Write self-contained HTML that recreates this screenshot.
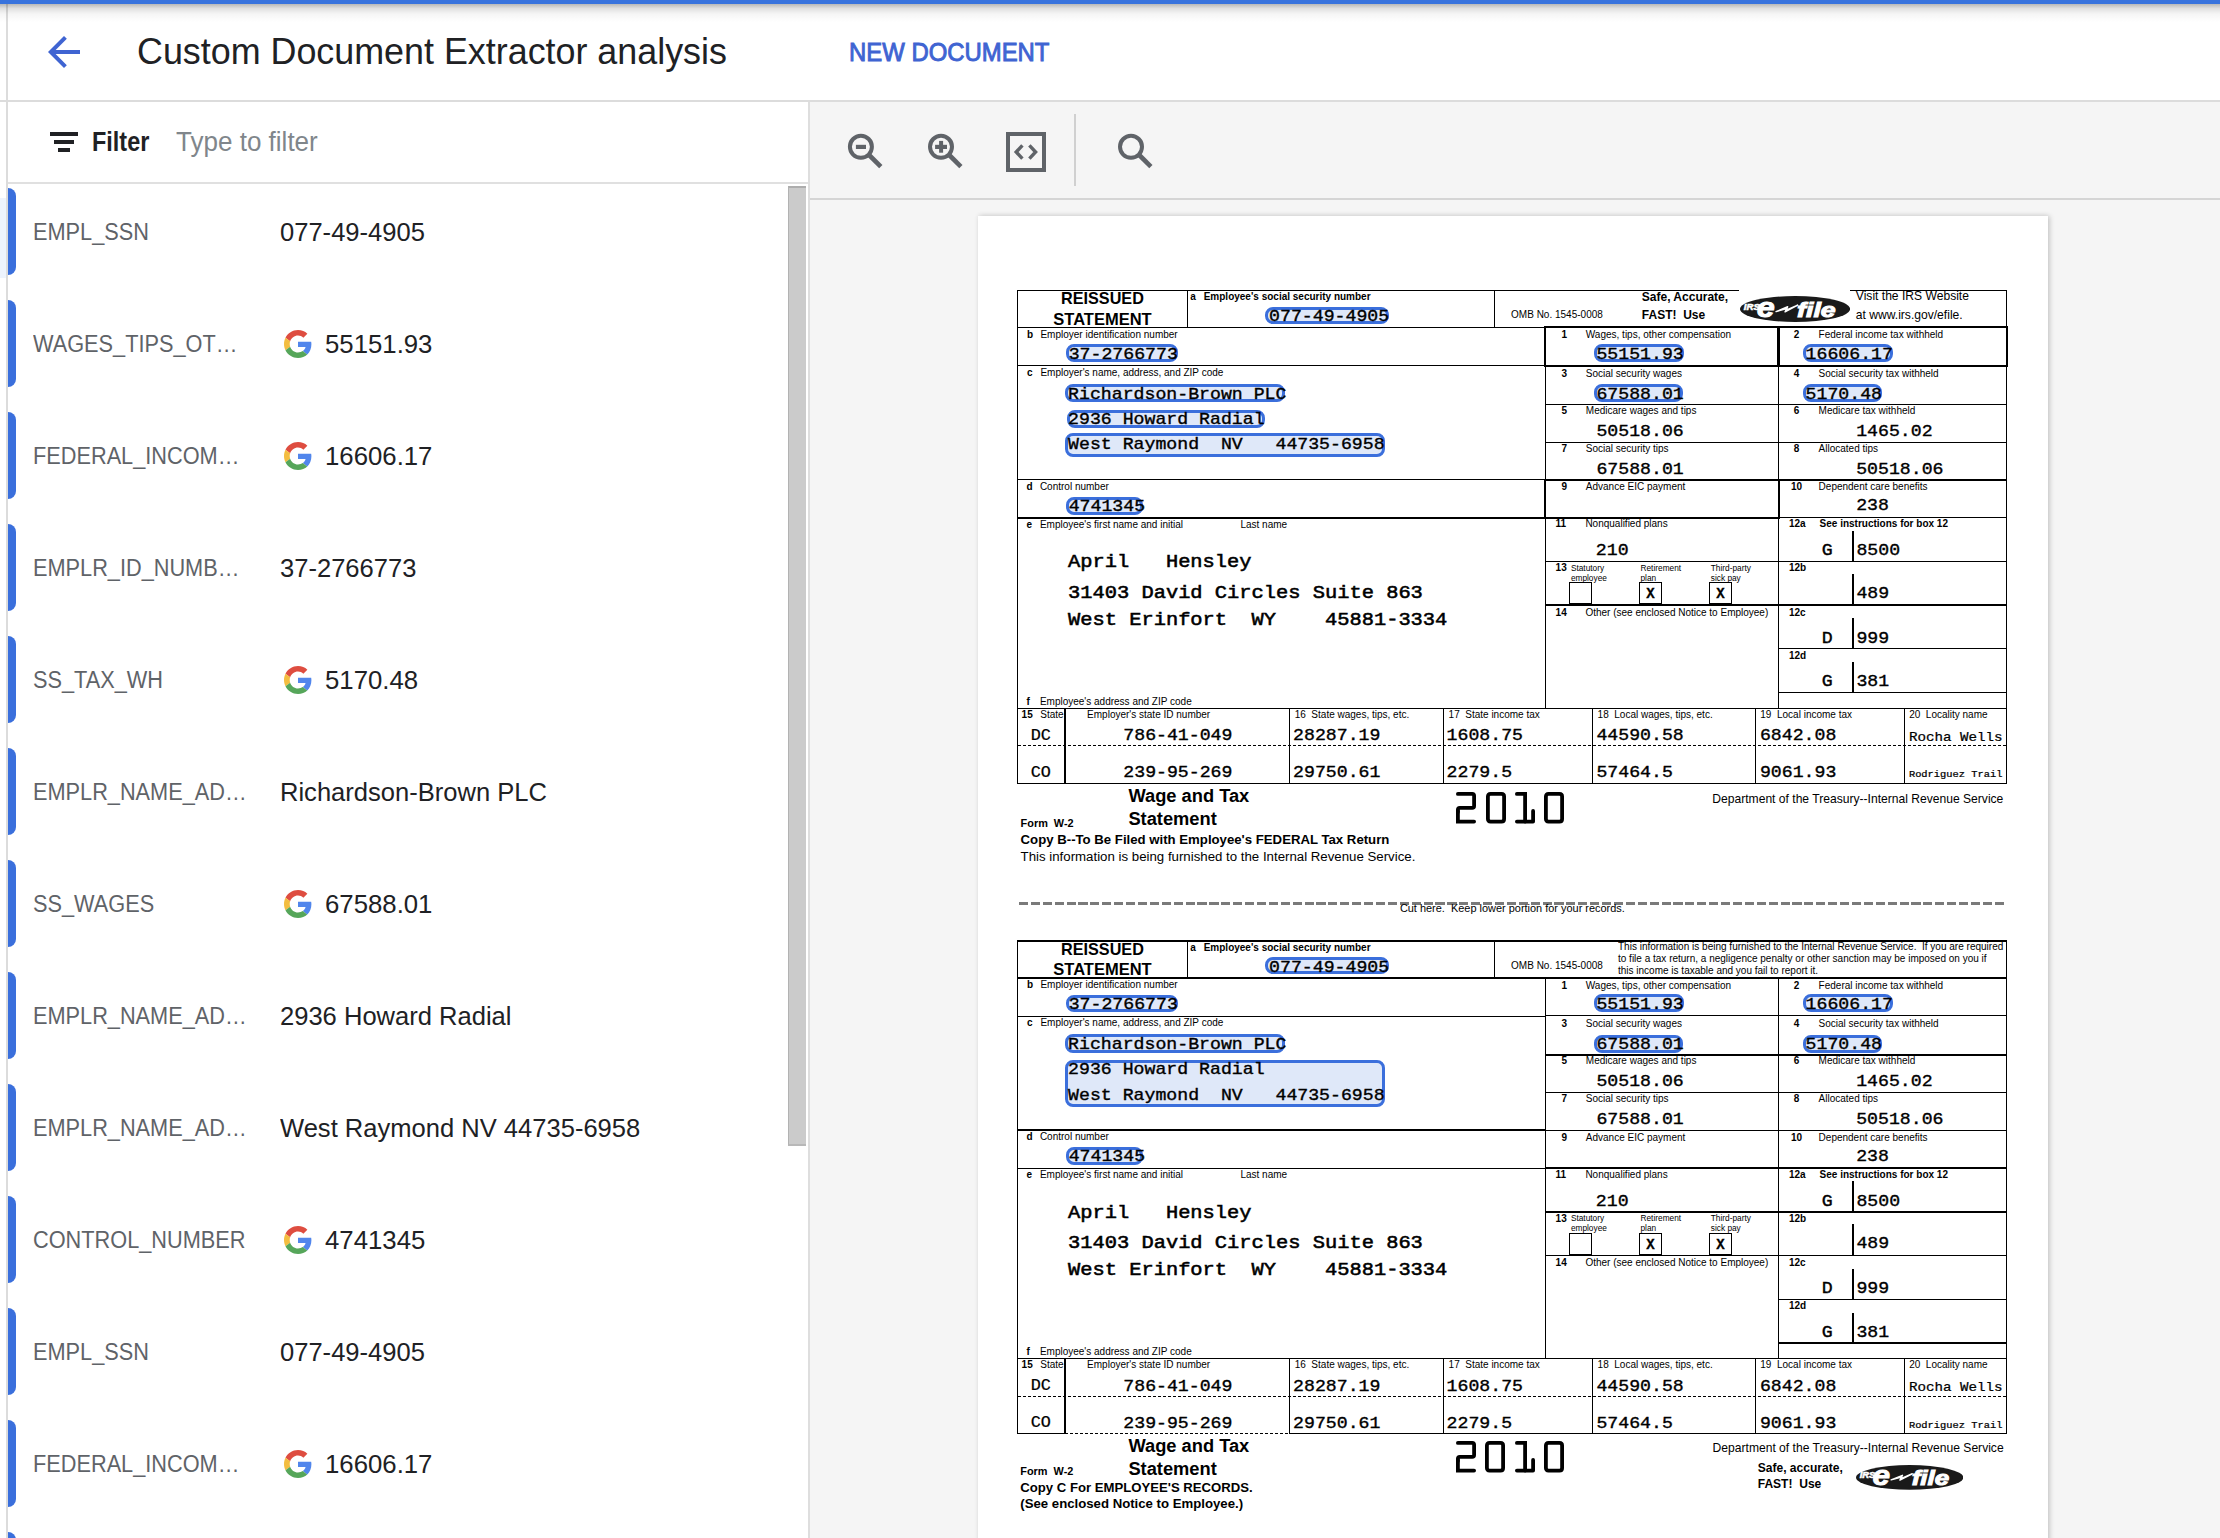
<!DOCTYPE html><html><head><meta charset="utf-8"><style>
html,body{margin:0;padding:0;width:2220px;height:1538px;overflow:hidden;background:#fff;}
.t{position:absolute;white-space:pre;}
.r{position:absolute;}
svg{position:absolute;}
</style></head><body>
<div class="r" style="left:0.00px;top:198.00px;width:6.20px;height:80.00px;background:#eef4fd"></div>
<div class="r" style="left:6.20px;top:4.00px;width:1.80px;height:1534.00px;background:#dcdcdc"></div>
<div class="r" style="left:0.00px;top:0.00px;width:2220.00px;height:4.00px;background:#3873dd"></div>
<div class="r" style="left:0.00px;top:4.00px;width:2220.00px;height:18.00px;background:linear-gradient(to bottom, rgba(0,0,0,0.28), rgba(0,0,0,0.12) 25%, rgba(0,0,0,0.04) 55%, rgba(0,0,0,0))"></div>
<div class="r" style="left:0.00px;top:100.00px;width:2220.00px;height:1.50px;background:#dcdcdc"></div>
<svg style="left:40px;top:28px" width="48" height="48" viewBox="0 0 24 24"><path fill="#3f64d2" d="M20 11H7.83l5.59-5.59L12 4l-8 8 8 8 1.41-1.41L7.83 13H20v-2z"/></svg>
<div class="t" style="left:137.00px;top:32.69px;font:normal 37.80px/37.80px 'Liberation Sans',sans-serif;color:#202124;transform:scale(0.9488,1.0000);transform-origin:0 32.01px;">Custom Document Extractor analysis</div>
<div class="t" style="left:849.00px;top:39.25px;font:normal 26.40px/26.40px 'Liberation Sans',sans-serif;color:#3f64d2;transform:scale(0.9054,1.0000);transform-origin:0 22.35px;-webkit-text-stroke:0.95px #3f64d2;">NEW DOCUMENT</div>
<div class="r" style="left:7.50px;top:182.00px;width:801.50px;height:1.50px;background:#e0e0e0"></div>
<div class="r" style="left:50.00px;top:132.00px;width:28.00px;height:4.30px;background:#202124"></div>
<div class="r" style="left:54.00px;top:140.00px;width:20.00px;height:4.30px;background:#202124"></div>
<div class="r" style="left:58.30px;top:147.70px;width:11.70px;height:4.30px;background:#202124"></div>
<div class="t" style="left:91.70px;top:129.22px;font:bold 26.90px/26.90px 'Liberation Sans',sans-serif;color:#202124;transform:scale(0.8713,1.0000);transform-origin:0 22.78px;">Filter</div>
<div class="t" style="left:176.00px;top:129.22px;font:normal 26.90px/26.90px 'Liberation Sans',sans-serif;color:#80868b;transform:scale(0.9678,1.0000);transform-origin:0 22.78px;">Type to filter</div>
<div class="r" style="left:808.20px;top:101.50px;width:1.80px;height:1436.50px;background:#dedede"></div>
<div class="r" style="left:788.10px;top:186.00px;width:17.80px;height:960.00px;background:#cbcbcb;border-left:1.8px solid #b2b2b2;border-top:2px solid #adadad;border-bottom:2px solid #b8b8b8;box-sizing:border-box"></div>
<div class="r" style="left:8.00px;top:188.00px;width:8.00px;height:87.00px;background:#3a6fdc;border-radius:0 8px 8px 0"></div>
<div class="t" style="left:32.50px;top:220.29px;font:normal 24.70px/24.70px 'Liberation Sans',sans-serif;color:#5f6368;transform:scale(0.8800,1.0000);transform-origin:0 20.91px;">EMPL_SSN</div>
<div class="t" style="left:280.20px;top:218.76px;font:normal 26.50px/26.50px 'Liberation Sans',sans-serif;color:#202124;transform:scale(0.9640,1.0000);transform-origin:0 22.44px;">077-49-4905</div>
<div class="r" style="left:8.00px;top:300.00px;width:8.00px;height:87.00px;background:#3a6fdc;border-radius:0 8px 8px 0"></div>
<div class="t" style="left:32.50px;top:332.29px;font:normal 24.70px/24.70px 'Liberation Sans',sans-serif;color:#5f6368;transform:scale(0.8800,1.0000);transform-origin:0 20.91px;">WAGES_TIPS_OT…</div>
<svg style="left:283.9px;top:329.8px" width="28" height="28" viewBox="0 0 48 48"><path fill="#de4d40" d="M24 9.5c3.54 0 6.71 1.22 9.21 3.6l6.85-6.85C35.9 2.38 30.47 0 24 0 14.62 0 6.51 5.38 2.56 13.22l7.98 6.19C12.43 13.72 17.74 9.5 24 9.5z"/><path fill="#5186ec" d="M46.98 24.55c0-1.57-.15-3.09-.38-4.55H24v9.02h12.94c-.58 2.96-2.26 5.480-4.78 7.18l7.73 6c4.51-4.18 7.09-10.36 7.09-17.65z"/><path fill="#f3bd40" d="M10.53 28.59c-.48-1.45-.76-2.99-.76-4.59s.27-3.14.76-4.59l-7.98-6.19C.92 16.46 0 20.12 0 24c0 3.880.92 7.54 2.56 10.78l7.97-6.19z"/><path fill="#56a65a" d="M24 48c6.48 0 11.930-2.13 15.89-5.81l-7.73-6c-2.15 1.45-4.92 2.3-8.16 2.3-6.26 0-11.57-4.22-13.47-9.91l-7.98 6.19C6.51 42.62 14.62 48 24 48z"/></svg>
<div class="t" style="left:325.00px;top:330.76px;font:normal 26.50px/26.50px 'Liberation Sans',sans-serif;color:#202124;transform:scale(0.9720,1.0000);transform-origin:0 22.44px;">55151.93</div>
<div class="r" style="left:8.00px;top:412.00px;width:8.00px;height:87.00px;background:#3a6fdc;border-radius:0 8px 8px 0"></div>
<div class="t" style="left:32.50px;top:444.29px;font:normal 24.70px/24.70px 'Liberation Sans',sans-serif;color:#5f6368;transform:scale(0.8800,1.0000);transform-origin:0 20.91px;">FEDERAL_INCOM…</div>
<svg style="left:283.9px;top:441.8px" width="28" height="28" viewBox="0 0 48 48"><path fill="#de4d40" d="M24 9.5c3.54 0 6.71 1.22 9.21 3.6l6.85-6.85C35.9 2.38 30.47 0 24 0 14.62 0 6.51 5.38 2.56 13.22l7.98 6.19C12.43 13.72 17.74 9.5 24 9.5z"/><path fill="#5186ec" d="M46.98 24.55c0-1.57-.15-3.09-.38-4.55H24v9.02h12.94c-.58 2.96-2.26 5.480-4.78 7.18l7.73 6c4.51-4.18 7.09-10.36 7.09-17.65z"/><path fill="#f3bd40" d="M10.53 28.59c-.48-1.45-.76-2.99-.76-4.59s.27-3.14.76-4.59l-7.98-6.19C.92 16.46 0 20.12 0 24c0 3.880.92 7.54 2.56 10.78l7.97-6.19z"/><path fill="#56a65a" d="M24 48c6.48 0 11.930-2.13 15.89-5.81l-7.73-6c-2.15 1.45-4.92 2.3-8.16 2.3-6.26 0-11.57-4.22-13.47-9.91l-7.98 6.19C6.51 42.62 14.62 48 24 48z"/></svg>
<div class="t" style="left:325.00px;top:442.76px;font:normal 26.50px/26.50px 'Liberation Sans',sans-serif;color:#202124;transform:scale(0.9720,1.0000);transform-origin:0 22.44px;">16606.17</div>
<div class="r" style="left:8.00px;top:524.00px;width:8.00px;height:87.00px;background:#3a6fdc;border-radius:0 8px 8px 0"></div>
<div class="t" style="left:32.50px;top:556.29px;font:normal 24.70px/24.70px 'Liberation Sans',sans-serif;color:#5f6368;transform:scale(0.8800,1.0000);transform-origin:0 20.91px;">EMPLR_ID_NUMB…</div>
<div class="t" style="left:280.20px;top:554.76px;font:normal 26.50px/26.50px 'Liberation Sans',sans-serif;color:#202124;transform:scale(0.9640,1.0000);transform-origin:0 22.44px;">37-2766773</div>
<div class="r" style="left:8.00px;top:636.00px;width:8.00px;height:87.00px;background:#3a6fdc;border-radius:0 8px 8px 0"></div>
<div class="t" style="left:32.50px;top:668.29px;font:normal 24.70px/24.70px 'Liberation Sans',sans-serif;color:#5f6368;transform:scale(0.8800,1.0000);transform-origin:0 20.91px;">SS_TAX_WH</div>
<svg style="left:283.9px;top:665.8px" width="28" height="28" viewBox="0 0 48 48"><path fill="#de4d40" d="M24 9.5c3.54 0 6.71 1.22 9.21 3.6l6.85-6.85C35.9 2.38 30.47 0 24 0 14.62 0 6.51 5.38 2.56 13.22l7.98 6.19C12.43 13.72 17.74 9.5 24 9.5z"/><path fill="#5186ec" d="M46.98 24.55c0-1.57-.15-3.09-.38-4.55H24v9.02h12.94c-.58 2.96-2.26 5.480-4.78 7.18l7.73 6c4.51-4.18 7.09-10.36 7.09-17.65z"/><path fill="#f3bd40" d="M10.53 28.59c-.48-1.45-.76-2.99-.76-4.59s.27-3.14.76-4.59l-7.98-6.19C.92 16.46 0 20.12 0 24c0 3.880.92 7.54 2.56 10.78l7.97-6.19z"/><path fill="#56a65a" d="M24 48c6.48 0 11.930-2.13 15.89-5.81l-7.73-6c-2.15 1.45-4.92 2.3-8.16 2.3-6.26 0-11.57-4.22-13.47-9.91l-7.98 6.19C6.51 42.62 14.62 48 24 48z"/></svg>
<div class="t" style="left:325.00px;top:666.76px;font:normal 26.50px/26.50px 'Liberation Sans',sans-serif;color:#202124;transform:scale(0.9720,1.0000);transform-origin:0 22.44px;">5170.48</div>
<div class="r" style="left:8.00px;top:748.00px;width:8.00px;height:87.00px;background:#3a6fdc;border-radius:0 8px 8px 0"></div>
<div class="t" style="left:32.50px;top:780.29px;font:normal 24.70px/24.70px 'Liberation Sans',sans-serif;color:#5f6368;transform:scale(0.8800,1.0000);transform-origin:0 20.91px;">EMPLR_NAME_AD…</div>
<div class="t" style="left:280.20px;top:778.76px;font:normal 26.50px/26.50px 'Liberation Sans',sans-serif;color:#202124;transform:scale(0.9640,1.0000);transform-origin:0 22.44px;">Richardson-Brown PLC</div>
<div class="r" style="left:8.00px;top:860.00px;width:8.00px;height:87.00px;background:#3a6fdc;border-radius:0 8px 8px 0"></div>
<div class="t" style="left:32.50px;top:892.29px;font:normal 24.70px/24.70px 'Liberation Sans',sans-serif;color:#5f6368;transform:scale(0.8800,1.0000);transform-origin:0 20.91px;">SS_WAGES</div>
<svg style="left:283.9px;top:889.8px" width="28" height="28" viewBox="0 0 48 48"><path fill="#de4d40" d="M24 9.5c3.54 0 6.71 1.22 9.21 3.6l6.85-6.85C35.9 2.38 30.47 0 24 0 14.62 0 6.51 5.38 2.56 13.22l7.98 6.19C12.43 13.72 17.74 9.5 24 9.5z"/><path fill="#5186ec" d="M46.98 24.55c0-1.57-.15-3.09-.38-4.55H24v9.02h12.94c-.58 2.96-2.26 5.480-4.78 7.18l7.73 6c4.51-4.18 7.09-10.36 7.09-17.65z"/><path fill="#f3bd40" d="M10.53 28.59c-.48-1.45-.76-2.99-.76-4.59s.27-3.14.76-4.59l-7.98-6.19C.92 16.46 0 20.12 0 24c0 3.880.92 7.54 2.56 10.78l7.97-6.19z"/><path fill="#56a65a" d="M24 48c6.48 0 11.930-2.13 15.89-5.81l-7.73-6c-2.15 1.45-4.92 2.3-8.16 2.3-6.26 0-11.57-4.22-13.47-9.91l-7.98 6.19C6.51 42.62 14.62 48 24 48z"/></svg>
<div class="t" style="left:325.00px;top:890.76px;font:normal 26.50px/26.50px 'Liberation Sans',sans-serif;color:#202124;transform:scale(0.9720,1.0000);transform-origin:0 22.44px;">67588.01</div>
<div class="r" style="left:8.00px;top:972.00px;width:8.00px;height:87.00px;background:#3a6fdc;border-radius:0 8px 8px 0"></div>
<div class="t" style="left:32.50px;top:1004.29px;font:normal 24.70px/24.70px 'Liberation Sans',sans-serif;color:#5f6368;transform:scale(0.8800,1.0000);transform-origin:0 20.91px;">EMPLR_NAME_AD…</div>
<div class="t" style="left:280.20px;top:1002.76px;font:normal 26.50px/26.50px 'Liberation Sans',sans-serif;color:#202124;transform:scale(0.9640,1.0000);transform-origin:0 22.44px;">2936 Howard Radial</div>
<div class="r" style="left:8.00px;top:1084.00px;width:8.00px;height:87.00px;background:#3a6fdc;border-radius:0 8px 8px 0"></div>
<div class="t" style="left:32.50px;top:1116.29px;font:normal 24.70px/24.70px 'Liberation Sans',sans-serif;color:#5f6368;transform:scale(0.8800,1.0000);transform-origin:0 20.91px;">EMPLR_NAME_AD…</div>
<div class="t" style="left:280.20px;top:1114.76px;font:normal 26.50px/26.50px 'Liberation Sans',sans-serif;color:#202124;transform:scale(0.9640,1.0000);transform-origin:0 22.44px;">West Raymond NV 44735-6958</div>
<div class="r" style="left:8.00px;top:1196.00px;width:8.00px;height:87.00px;background:#3a6fdc;border-radius:0 8px 8px 0"></div>
<div class="t" style="left:32.50px;top:1228.29px;font:normal 24.70px/24.70px 'Liberation Sans',sans-serif;color:#5f6368;transform:scale(0.8800,1.0000);transform-origin:0 20.91px;">CONTROL_NUMBER</div>
<svg style="left:283.9px;top:1225.8px" width="28" height="28" viewBox="0 0 48 48"><path fill="#de4d40" d="M24 9.5c3.54 0 6.71 1.22 9.21 3.6l6.85-6.85C35.9 2.38 30.47 0 24 0 14.62 0 6.51 5.38 2.56 13.22l7.98 6.19C12.43 13.72 17.74 9.5 24 9.5z"/><path fill="#5186ec" d="M46.98 24.55c0-1.57-.15-3.09-.38-4.55H24v9.02h12.94c-.58 2.96-2.26 5.480-4.78 7.18l7.73 6c4.51-4.18 7.09-10.36 7.09-17.65z"/><path fill="#f3bd40" d="M10.53 28.59c-.48-1.45-.76-2.99-.76-4.59s.27-3.14.76-4.59l-7.98-6.19C.92 16.46 0 20.12 0 24c0 3.880.92 7.54 2.56 10.78l7.97-6.19z"/><path fill="#56a65a" d="M24 48c6.48 0 11.930-2.13 15.89-5.81l-7.73-6c-2.15 1.45-4.92 2.3-8.16 2.3-6.26 0-11.57-4.22-13.47-9.91l-7.98 6.19C6.51 42.62 14.62 48 24 48z"/></svg>
<div class="t" style="left:325.00px;top:1226.76px;font:normal 26.50px/26.50px 'Liberation Sans',sans-serif;color:#202124;transform:scale(0.9720,1.0000);transform-origin:0 22.44px;">4741345</div>
<div class="r" style="left:8.00px;top:1308.00px;width:8.00px;height:87.00px;background:#3a6fdc;border-radius:0 8px 8px 0"></div>
<div class="t" style="left:32.50px;top:1340.29px;font:normal 24.70px/24.70px 'Liberation Sans',sans-serif;color:#5f6368;transform:scale(0.8800,1.0000);transform-origin:0 20.91px;">EMPL_SSN</div>
<div class="t" style="left:280.20px;top:1338.76px;font:normal 26.50px/26.50px 'Liberation Sans',sans-serif;color:#202124;transform:scale(0.9640,1.0000);transform-origin:0 22.44px;">077-49-4905</div>
<div class="r" style="left:8.00px;top:1420.00px;width:8.00px;height:87.00px;background:#3a6fdc;border-radius:0 8px 8px 0"></div>
<div class="t" style="left:32.50px;top:1452.29px;font:normal 24.70px/24.70px 'Liberation Sans',sans-serif;color:#5f6368;transform:scale(0.8800,1.0000);transform-origin:0 20.91px;">FEDERAL_INCOM…</div>
<svg style="left:283.9px;top:1449.8px" width="28" height="28" viewBox="0 0 48 48"><path fill="#de4d40" d="M24 9.5c3.54 0 6.71 1.22 9.21 3.6l6.85-6.85C35.9 2.38 30.47 0 24 0 14.62 0 6.51 5.38 2.56 13.22l7.98 6.19C12.43 13.72 17.74 9.5 24 9.5z"/><path fill="#5186ec" d="M46.98 24.55c0-1.57-.15-3.09-.38-4.55H24v9.02h12.94c-.58 2.96-2.26 5.480-4.78 7.18l7.73 6c4.51-4.18 7.09-10.36 7.09-17.65z"/><path fill="#f3bd40" d="M10.53 28.59c-.48-1.45-.76-2.99-.76-4.59s.27-3.14.76-4.59l-7.98-6.19C.92 16.46 0 20.12 0 24c0 3.880.92 7.54 2.56 10.78l7.97-6.19z"/><path fill="#56a65a" d="M24 48c6.48 0 11.930-2.13 15.89-5.81l-7.73-6c-2.15 1.45-4.92 2.3-8.16 2.3-6.26 0-11.57-4.22-13.47-9.91l-7.98 6.19C6.51 42.62 14.62 48 24 48z"/></svg>
<div class="t" style="left:325.00px;top:1450.76px;font:normal 26.50px/26.50px 'Liberation Sans',sans-serif;color:#202124;transform:scale(0.9720,1.0000);transform-origin:0 22.44px;">16606.17</div>
<div class="r" style="left:8.00px;top:1532.00px;width:8.00px;height:87.00px;background:#3a6fdc;border-radius:0 8px 8px 0"></div>
<div class="r" style="left:810.00px;top:101.50px;width:1410.00px;height:96.50px;background:#f5f5f5"></div>
<div class="r" style="left:810.00px;top:197.60px;width:1410.00px;height:2.20px;background:#d5d5d5"></div>
<svg style="left:0;top:0;overflow:visible" width="1" height="1"><g transform="translate(0.00 0)" fill="none" stroke="#5f6368"><circle cx="860.9" cy="146.8" r="11" stroke-width="4"/><path d="M868.6 154.5 L880.8 166.7" stroke-width="4.6"/></g><rect x="855.9" y="144.8" width="10.1" height="4.2" fill="#5f6368"/></svg>
<svg style="left:0;top:0;overflow:visible" width="1" height="1"><g transform="translate(80.10 0)" fill="none" stroke="#5f6368"><circle cx="860.9" cy="146.8" r="11" stroke-width="4"/><path d="M868.6 154.5 L880.8 166.7" stroke-width="4.6"/></g><rect x="935.1" y="144.8" width="11.9" height="4.2" fill="#5f6368"/><rect x="939.1" y="140.9" width="4" height="11.8" fill="#5f6368"/></svg>
<svg style="left:0;top:0;overflow:visible" width="1" height="1"><g transform="translate(270.10 0)" fill="none" stroke="#5f6368"><circle cx="860.9" cy="146.8" r="11" stroke-width="4"/><path d="M868.6 154.5 L880.8 166.7" stroke-width="4.6"/></g></svg>
<div class="r" style="left:1006.00px;top:131.90px;width:40.10px;height:39.90px;border:4px solid #5f6368;box-sizing:border-box"></div>
<svg style="left:0;top:0;overflow:visible" width="1" height="1"><path fill="none" stroke="#5f6368" stroke-width="3.4" d="M1022.4 145.4 L1016.2 152 L1022.4 158.6 M1029.4 145.4 L1035.6 152 L1029.4 158.6"/></svg>
<div class="r" style="left:1074.20px;top:114.00px;width:1.40px;height:72.00px;background:#d0d0d0"></div>
<div class="r" style="left:810.00px;top:199.80px;width:1410.00px;height:1338.20px;background:#f5f5f5"></div>
<div class="r" style="left:978.00px;top:216.00px;width:1070.00px;height:1344.00px;background:#fff;box-shadow:2px 0 5px rgba(0,0,0,0.16), 0 -1px 5px rgba(0,0,0,0.06)"></div>
<div class="r" style="left:1016.85px;top:289.85px;width:722.15px;height:1.30px;background:#000"></div>
<div class="r" style="left:1850.00px;top:289.85px;width:157.15px;height:1.30px;background:#000"></div>
<div class="r" style="left:1016.85px;top:290.50px;width:1.30px;height:493.45px;background:#000"></div>
<div class="r" style="left:2005.85px;top:290.50px;width:1.30px;height:493.45px;background:#000"></div>
<div class="r" style="left:1186.65px;top:290.50px;width:1.30px;height:37.00px;background:#000"></div>
<div class="r" style="left:1493.95px;top:290.50px;width:1.30px;height:37.00px;background:#000"></div>
<div class="r" style="left:1017.50px;top:326.85px;width:989.00px;height:1.30px;background:#000"></div>
<div class="r" style="left:1017.50px;top:365.15px;width:528.10px;height:1.30px;background:#000"></div>
<div class="r" style="left:1017.50px;top:478.85px;width:528.10px;height:1.30px;background:#000"></div>
<div class="r" style="left:1017.50px;top:517.35px;width:528.10px;height:1.30px;background:#000"></div>
<div class="r" style="left:1017.50px;top:707.65px;width:989.00px;height:1.30px;background:#000"></div>
<div class="r" style="left:1544.95px;top:327.50px;width:1.30px;height:380.80px;background:#000"></div>
<div class="r" style="left:1778.05px;top:327.50px;width:1.30px;height:380.80px;background:#000"></div>
<div class="r" style="left:1545.60px;top:364.55px;width:460.90px;height:1.30px;background:#000"></div>
<div class="r" style="left:1545.60px;top:403.85px;width:460.90px;height:1.30px;background:#000"></div>
<div class="r" style="left:1545.60px;top:441.55px;width:460.90px;height:1.30px;background:#000"></div>
<div class="r" style="left:1545.60px;top:479.35px;width:460.90px;height:1.30px;background:#000"></div>
<div class="r" style="left:1545.60px;top:516.95px;width:460.90px;height:1.30px;background:#000"></div>
<div class="r" style="left:1545.60px;top:560.85px;width:460.90px;height:1.30px;background:#000"></div>
<div class="r" style="left:1545.60px;top:604.35px;width:460.90px;height:1.30px;background:#000"></div>
<div class="r" style="left:1778.70px;top:648.15px;width:227.80px;height:1.30px;background:#000"></div>
<div class="r" style="left:1778.70px;top:692.05px;width:227.80px;height:1.30px;background:#000"></div>
<div class="r" style="left:1852.45px;top:530.50px;width:1.30px;height:31.00px;background:#000"></div>
<div class="r" style="left:1852.45px;top:573.80px;width:1.30px;height:31.20px;background:#000"></div>
<div class="r" style="left:1852.45px;top:618.10px;width:1.30px;height:30.70px;background:#000"></div>
<div class="r" style="left:1852.45px;top:662.40px;width:1.30px;height:30.30px;background:#000"></div>
<div class="r" style="left:1544.20px;top:326.10px;width:463.70px;height:40.50px;border:2.80px solid #000;box-sizing:border-box"></div>
<div class="r" style="left:1544.20px;top:478.60px;width:235.90px;height:40.40px;border:2.80px solid #000;box-sizing:border-box"></div>
<div class="r" style="left:1777.30px;top:327.50px;width:2.80px;height:37.70px;background:#000"></div>
<div class="r" style="left:1017.50px;top:745.40px;width:989.00px;height:1.00px;background:repeating-linear-gradient(to right, #000 0, #000 3.20px, transparent 3.20px, transparent 5.00px)"></div>
<div class="r" style="left:1016.85px;top:782.65px;width:990.30px;height:1.30px;background:#000"></div>
<div class="r" style="left:1064.25px;top:708.30px;width:1.30px;height:75.00px;background:#000"></div>
<div class="r" style="left:1288.85px;top:708.30px;width:1.30px;height:75.00px;background:#000"></div>
<div class="r" style="left:1442.75px;top:708.30px;width:1.30px;height:75.00px;background:#000"></div>
<div class="r" style="left:1591.55px;top:708.30px;width:1.30px;height:75.00px;background:#000"></div>
<div class="r" style="left:1755.05px;top:708.30px;width:1.30px;height:75.00px;background:#000"></div>
<div class="r" style="left:1903.65px;top:708.30px;width:1.30px;height:75.00px;background:#000"></div>
<div class="t" style="left:1061.09px;top:290.28px;font:bold 16.20px/16.20px 'Liberation Sans',sans-serif;color:#000;">REISSUED</div>
<div class="t" style="left:1053.31px;top:310.83px;font:bold 16.50px/16.50px 'Liberation Sans',sans-serif;color:#000;">STATEMENT</div>
<div class="t" style="left:1190.20px;top:292.23px;font:bold 10.00px/10.00px 'Liberation Sans',sans-serif;color:#000;">a</div>
<div class="t" style="left:1203.70px;top:292.23px;font:bold 10.00px/10.00px 'Liberation Sans',sans-serif;color:#000;">Employee's social security number</div>
<div class="r" style="left:1265.20px;top:306.50px;width:123.70px;height:17.40px;border:3.8px solid #3b6fdc;border-radius:8px;box-sizing:border-box;background:rgba(59,111,220,0.16)"></div>
<div class="t" style="left:1269.10px;top:307.16px;font:normal 18.20px/18.20px 'Liberation Mono',monospace;color:#000;transform:scale(1.0000,0.9350);transform-origin:0 13.94px;-webkit-text-stroke:0.4px #000;">077-49-4905</div>
<div class="t" style="left:1511.10px;top:310.43px;font:normal 10.00px/10.00px 'Liberation Sans',sans-serif;color:#000;">OMB No. 1545-0008</div>
<div class="t" style="left:1641.80px;top:290.54px;font:bold 12.00px/12.00px 'Liberation Sans',sans-serif;color:#000;">Safe, Accurate,</div>
<div class="t" style="left:1641.80px;top:308.74px;font:bold 12.00px/12.00px 'Liberation Sans',sans-serif;color:#000;">FAST!  Use</div>
<svg style="left:1739.50px;top:296.20px" width="110.20" height="26.00" viewBox="0 0 110 26" preserveAspectRatio="none"><ellipse cx="55" cy="13" rx="55" ry="13" fill="#1a1a1a"/><g fill="#fff" stroke="#fff" font-family="Liberation Sans" font-weight="bold" font-style="italic"><text x="3.8" y="13.6" font-size="9.6" textLength="16" lengthAdjust="spacingAndGlyphs" stroke-width="0.6">IRS</text><text x="16.8" y="21.3" font-size="28" textLength="18" lengthAdjust="spacingAndGlyphs" stroke-width="0.9">e</text><path d="M36 15.6 L47.6 10.8 L46 14.2 L57.6 9.2 L45 15.8 L46.6 12.6 Z" stroke-width="1.5" stroke-linejoin="round"/><text x="57" y="20.6" font-size="20.5" textLength="38.5" lengthAdjust="spacingAndGlyphs" stroke-width="1.0">file</text></g></svg>
<div class="t" style="left:1855.80px;top:290.45px;font:normal 12.10px/12.10px 'Liberation Sans',sans-serif;color:#000;">Visit the IRS Website</div>
<div class="t" style="left:1855.80px;top:308.65px;font:normal 12.10px/12.10px 'Liberation Sans',sans-serif;color:#000;">at www.irs.gov/efile.</div>
<div class="t" style="left:1026.90px;top:329.53px;font:bold 10.00px/10.00px 'Liberation Sans',sans-serif;color:#000;">b</div>
<div class="t" style="left:1040.40px;top:329.53px;font:normal 10.00px/10.00px 'Liberation Sans',sans-serif;color:#000;">Employer identification number</div>
<div class="r" style="left:1065.50px;top:344.20px;width:112.30px;height:17.80px;border:3.8px solid #3b6fdc;border-radius:8px;box-sizing:border-box;background:rgba(59,111,220,0.16)"></div>
<div class="t" style="left:1068.70px;top:344.96px;font:normal 18.20px/18.20px 'Liberation Mono',monospace;color:#000;transform:scale(1.0000,0.9350);transform-origin:0 13.94px;-webkit-text-stroke:0.4px #000;">37-2766773</div>
<div class="t" style="left:1026.90px;top:367.73px;font:bold 10.00px/10.00px 'Liberation Sans',sans-serif;color:#000;">c</div>
<div class="t" style="left:1040.40px;top:367.73px;font:normal 10.00px/10.00px 'Liberation Sans',sans-serif;color:#000;">Employer's name, address, and ZIP code</div>
<div class="r" style="left:1064.50px;top:384.00px;width:220.50px;height:18.20px;border:3.8px solid #3b6fdc;border-radius:8px;box-sizing:border-box;background:rgba(59,111,220,0.16)"></div>
<div class="t" style="left:1068.10px;top:384.66px;font:normal 18.20px/18.20px 'Liberation Mono',monospace;color:#000;transform:scale(1.0000,0.9350);transform-origin:0 13.94px;-webkit-text-stroke:0.4px #000;">Richardson-Brown PLC</div>
<div class="r" style="left:1066.50px;top:409.50px;width:198.80px;height:18.00px;border:3.8px solid #3b6fdc;border-radius:8px;box-sizing:border-box;background:rgba(59,111,220,0.16)"></div>
<div class="r" style="left:1064.50px;top:433.00px;width:320.80px;height:23.80px;border:3.8px solid #3b6fdc;border-radius:8px;box-sizing:border-box;background:rgba(59,111,220,0.16)"></div>
<div class="t" style="left:1068.10px;top:410.06px;font:normal 18.20px/18.20px 'Liberation Mono',monospace;color:#000;transform:scale(1.0000,0.9350);transform-origin:0 13.94px;-webkit-text-stroke:0.4px #000;">2936 Howard Radial</div>
<div class="t" style="left:1068.10px;top:435.26px;font:normal 18.20px/18.20px 'Liberation Mono',monospace;color:#000;transform:scale(1.0000,0.9350);transform-origin:0 13.94px;-webkit-text-stroke:0.4px #000;">West Raymond  NV   44735-6958</div>
<div class="t" style="left:1026.50px;top:481.73px;font:bold 10.00px/10.00px 'Liberation Sans',sans-serif;color:#000;">d</div>
<div class="t" style="left:1039.90px;top:481.73px;font:normal 10.00px/10.00px 'Liberation Sans',sans-serif;color:#000;">Control number</div>
<div class="r" style="left:1065.60px;top:497.00px;width:77.70px;height:17.70px;border:3.8px solid #3b6fdc;border-radius:8px;box-sizing:border-box;background:rgba(59,111,220,0.16)"></div>
<div class="t" style="left:1068.70px;top:496.96px;font:normal 18.20px/18.20px 'Liberation Mono',monospace;color:#000;transform:scale(1.0000,0.9350);transform-origin:0 13.94px;-webkit-text-stroke:0.4px #000;">4741345</div>
<div class="t" style="left:1026.50px;top:519.53px;font:bold 10.00px/10.00px 'Liberation Sans',sans-serif;color:#000;">e</div>
<div class="t" style="left:1039.90px;top:519.53px;font:normal 10.00px/10.00px 'Liberation Sans',sans-serif;color:#000;">Employee's first name and initial</div>
<div class="t" style="left:1240.40px;top:519.53px;font:normal 10.00px/10.00px 'Liberation Sans',sans-serif;color:#000;">Last name</div>
<div class="t" style="left:1068.00px;top:552.37px;font:normal 20.40px/20.40px 'Liberation Mono',monospace;color:#000;transform:scale(1.0000,0.9300);transform-origin:0 15.63px;-webkit-text-stroke:0.6px #000;">April   Hensley</div>
<div class="t" style="left:1068.00px;top:582.57px;font:normal 20.40px/20.40px 'Liberation Mono',monospace;color:#000;transform:scale(1.0000,0.9300);transform-origin:0 15.63px;-webkit-text-stroke:0.6px #000;">31403 David Circles Suite 863</div>
<div class="t" style="left:1068.00px;top:609.87px;font:normal 20.40px/20.40px 'Liberation Mono',monospace;color:#000;transform:scale(1.0000,0.9300);transform-origin:0 15.63px;-webkit-text-stroke:0.6px #000;">West Erinfort  WY    45881-3334</div>
<div class="t" style="left:1026.50px;top:696.63px;font:bold 10.00px/10.00px 'Liberation Sans',sans-serif;color:#000;">f</div>
<div class="t" style="left:1039.90px;top:696.63px;font:normal 10.00px/10.00px 'Liberation Sans',sans-serif;color:#000;">Employee's address and ZIP code</div>
<div class="t" style="left:1561.52px;top:330.43px;font:bold 10.00px/10.00px 'Liberation Sans',sans-serif;color:#000;">1</div>
<div class="t" style="left:1585.80px;top:330.43px;font:normal 10.00px/10.00px 'Liberation Sans',sans-serif;color:#000;">Wages, tips, other compensation</div>
<div class="t" style="left:1793.72px;top:330.43px;font:bold 10.00px/10.00px 'Liberation Sans',sans-serif;color:#000;">2</div>
<div class="t" style="left:1818.60px;top:330.43px;font:normal 10.00px/10.00px 'Liberation Sans',sans-serif;color:#000;">Federal income tax withheld</div>
<div class="t" style="left:1561.52px;top:368.83px;font:bold 10.00px/10.00px 'Liberation Sans',sans-serif;color:#000;">3</div>
<div class="t" style="left:1585.80px;top:368.83px;font:normal 10.00px/10.00px 'Liberation Sans',sans-serif;color:#000;">Social security wages</div>
<div class="t" style="left:1793.72px;top:368.83px;font:bold 10.00px/10.00px 'Liberation Sans',sans-serif;color:#000;">4</div>
<div class="t" style="left:1818.60px;top:368.83px;font:normal 10.00px/10.00px 'Liberation Sans',sans-serif;color:#000;">Social security tax withheld</div>
<div class="t" style="left:1561.52px;top:406.03px;font:bold 10.00px/10.00px 'Liberation Sans',sans-serif;color:#000;">5</div>
<div class="t" style="left:1585.80px;top:406.03px;font:normal 10.00px/10.00px 'Liberation Sans',sans-serif;color:#000;">Medicare wages and tips</div>
<div class="t" style="left:1793.72px;top:406.03px;font:bold 10.00px/10.00px 'Liberation Sans',sans-serif;color:#000;">6</div>
<div class="t" style="left:1818.60px;top:406.03px;font:normal 10.00px/10.00px 'Liberation Sans',sans-serif;color:#000;">Medicare tax withheld</div>
<div class="t" style="left:1561.52px;top:443.73px;font:bold 10.00px/10.00px 'Liberation Sans',sans-serif;color:#000;">7</div>
<div class="t" style="left:1585.80px;top:443.73px;font:normal 10.00px/10.00px 'Liberation Sans',sans-serif;color:#000;">Social security tips</div>
<div class="t" style="left:1793.72px;top:443.73px;font:bold 10.00px/10.00px 'Liberation Sans',sans-serif;color:#000;">8</div>
<div class="t" style="left:1818.60px;top:443.73px;font:normal 10.00px/10.00px 'Liberation Sans',sans-serif;color:#000;">Allocated tips</div>
<div class="t" style="left:1561.52px;top:482.13px;font:bold 10.00px/10.00px 'Liberation Sans',sans-serif;color:#000;">9</div>
<div class="t" style="left:1585.80px;top:482.13px;font:normal 10.00px/10.00px 'Liberation Sans',sans-serif;color:#000;">Advance EIC payment</div>
<div class="t" style="left:1790.94px;top:482.13px;font:bold 10.00px/10.00px 'Liberation Sans',sans-serif;color:#000;">10</div>
<div class="t" style="left:1818.60px;top:482.13px;font:normal 10.00px/10.00px 'Liberation Sans',sans-serif;color:#000;">Dependent care benefits</div>
<div class="t" style="left:1596.40px;top:421.76px;font:normal 18.20px/18.20px 'Liberation Mono',monospace;color:#000;transform:scale(1.0000,0.9350);transform-origin:0 13.94px;-webkit-text-stroke:0.4px #000;">50518.06</div>
<div class="t" style="left:1856.20px;top:421.76px;font:normal 18.20px/18.20px 'Liberation Mono',monospace;color:#000;transform:scale(1.0000,0.9350);transform-origin:0 13.94px;-webkit-text-stroke:0.4px #000;">1465.02</div>
<div class="t" style="left:1596.40px;top:459.96px;font:normal 18.20px/18.20px 'Liberation Mono',monospace;color:#000;transform:scale(1.0000,0.9350);transform-origin:0 13.94px;-webkit-text-stroke:0.4px #000;">67588.01</div>
<div class="t" style="left:1856.20px;top:459.96px;font:normal 18.20px/18.20px 'Liberation Mono',monospace;color:#000;transform:scale(1.0000,0.9350);transform-origin:0 13.94px;-webkit-text-stroke:0.4px #000;">50518.06</div>
<div class="t" style="left:1856.20px;top:496.46px;font:normal 18.20px/18.20px 'Liberation Mono',monospace;color:#000;transform:scale(1.0000,0.9350);transform-origin:0 13.94px;-webkit-text-stroke:0.4px #000;">238</div>
<div class="r" style="left:1594.30px;top:343.70px;width:89.50px;height:18.00px;border:3.8px solid #3b6fdc;border-radius:8px;box-sizing:border-box;background:rgba(59,111,220,0.16)"></div>
<div class="r" style="left:1802.80px;top:343.70px;width:90.00px;height:18.00px;border:3.8px solid #3b6fdc;border-radius:8px;box-sizing:border-box;background:rgba(59,111,220,0.16)"></div>
<div class="r" style="left:1594.00px;top:384.10px;width:89.10px;height:18.30px;border:3.8px solid #3b6fdc;border-radius:8px;box-sizing:border-box;background:rgba(59,111,220,0.16)"></div>
<div class="r" style="left:1802.80px;top:384.10px;width:79.00px;height:18.30px;border:3.8px solid #3b6fdc;border-radius:8px;box-sizing:border-box;background:rgba(59,111,220,0.16)"></div>
<div class="t" style="left:1596.40px;top:345.06px;font:normal 18.20px/18.20px 'Liberation Mono',monospace;color:#000;transform:scale(1.0000,0.9350);transform-origin:0 13.94px;-webkit-text-stroke:0.4px #000;">55151.93</div>
<div class="t" style="left:1805.60px;top:345.06px;font:normal 18.20px/18.20px 'Liberation Mono',monospace;color:#000;transform:scale(1.0000,0.9350);transform-origin:0 13.94px;-webkit-text-stroke:0.4px #000;">16606.17</div>
<div class="t" style="left:1596.40px;top:384.76px;font:normal 18.20px/18.20px 'Liberation Mono',monospace;color:#000;transform:scale(1.0000,0.9350);transform-origin:0 13.94px;-webkit-text-stroke:0.4px #000;">67588.01</div>
<div class="t" style="left:1805.60px;top:384.76px;font:normal 18.20px/18.20px 'Liberation Mono',monospace;color:#000;transform:scale(1.0000,0.9350);transform-origin:0 13.94px;-webkit-text-stroke:0.4px #000;">5170.48</div>
<div class="t" style="left:1555.60px;top:519.33px;font:bold 10.00px/10.00px 'Liberation Sans',sans-serif;color:#000;">11</div>
<div class="t" style="left:1585.40px;top:519.33px;font:normal 10.00px/10.00px 'Liberation Sans',sans-serif;color:#000;">Nonqualified plans</div>
<div class="t" style="left:1789.00px;top:519.33px;font:bold 10.00px/10.00px 'Liberation Sans',sans-serif;color:#000;">12a</div>
<div class="t" style="left:1819.60px;top:519.33px;font:bold 10.00px/10.00px 'Liberation Sans',sans-serif;color:#000;">See instructions for box 12</div>
<div class="t" style="left:1595.80px;top:541.46px;font:normal 18.20px/18.20px 'Liberation Mono',monospace;color:#000;transform:scale(1.0000,0.9350);transform-origin:0 13.94px;-webkit-text-stroke:0.4px #000;">210</div>
<div class="t" style="left:1821.80px;top:541.46px;font:normal 18.20px/18.20px 'Liberation Mono',monospace;color:#000;transform:scale(1.0000,0.9350);transform-origin:0 13.94px;-webkit-text-stroke:0.4px #000;">G</div>
<div class="t" style="left:1856.40px;top:541.46px;font:normal 18.20px/18.20px 'Liberation Mono',monospace;color:#000;transform:scale(1.0000,0.9350);transform-origin:0 13.94px;-webkit-text-stroke:0.4px #000;">8500</div>
<div class="t" style="left:1555.60px;top:563.13px;font:bold 10.00px/10.00px 'Liberation Sans',sans-serif;color:#000;">13</div>
<div class="t" style="left:1570.90px;top:563.97px;font:normal 8.30px/8.30px 'Liberation Sans',sans-serif;color:#000;">Statutory</div>
<div class="t" style="left:1570.90px;top:573.87px;font:normal 8.30px/8.30px 'Liberation Sans',sans-serif;color:#000;">employee</div>
<div class="t" style="left:1640.50px;top:563.97px;font:normal 8.30px/8.30px 'Liberation Sans',sans-serif;color:#000;">Retirement</div>
<div class="t" style="left:1640.50px;top:573.87px;font:normal 8.30px/8.30px 'Liberation Sans',sans-serif;color:#000;">plan</div>
<div class="t" style="left:1710.80px;top:563.97px;font:normal 8.30px/8.30px 'Liberation Sans',sans-serif;color:#000;">Third-party</div>
<div class="t" style="left:1710.80px;top:573.87px;font:normal 8.30px/8.30px 'Liberation Sans',sans-serif;color:#000;">sick pay</div>
<div class="r" style="left:1568.80px;top:582.40px;width:23.50px;height:22.10px;border:1.3px solid #000;box-sizing:border-box;background:#fff"></div>
<div class="r" style="left:1638.60px;top:582.40px;width:23.80px;height:22.10px;border:1.3px solid #000;box-sizing:border-box;background:#fff"></div>
<div class="r" style="left:1708.60px;top:582.40px;width:23.80px;height:22.10px;border:1.3px solid #000;box-sizing:border-box;background:#fff"></div>
<div class="t" style="left:1646.30px;top:587.28px;font:bold 14.00px/14.00px 'Liberation Mono',monospace;color:#000;-webkit-text-stroke:0.3px #000;">X</div>
<div class="t" style="left:1716.30px;top:587.28px;font:bold 14.00px/14.00px 'Liberation Mono',monospace;color:#000;-webkit-text-stroke:0.3px #000;">X</div>
<div class="t" style="left:1789.00px;top:563.13px;font:bold 10.00px/10.00px 'Liberation Sans',sans-serif;color:#000;">12b</div>
<div class="t" style="left:1856.40px;top:583.66px;font:normal 18.20px/18.20px 'Liberation Mono',monospace;color:#000;transform:scale(1.0000,0.9350);transform-origin:0 13.94px;-webkit-text-stroke:0.4px #000;">489</div>
<div class="t" style="left:1555.60px;top:607.53px;font:bold 10.00px/10.00px 'Liberation Sans',sans-serif;color:#000;">14</div>
<div class="t" style="left:1585.40px;top:607.53px;font:normal 10.00px/10.00px 'Liberation Sans',sans-serif;color:#000;">Other (see enclosed Notice to Employee)</div>
<div class="t" style="left:1789.00px;top:607.53px;font:bold 10.00px/10.00px 'Liberation Sans',sans-serif;color:#000;">12c</div>
<div class="t" style="left:1821.80px;top:629.06px;font:normal 18.20px/18.20px 'Liberation Mono',monospace;color:#000;transform:scale(1.0000,0.9350);transform-origin:0 13.94px;-webkit-text-stroke:0.4px #000;">D</div>
<div class="t" style="left:1856.40px;top:629.06px;font:normal 18.20px/18.20px 'Liberation Mono',monospace;color:#000;transform:scale(1.0000,0.9350);transform-origin:0 13.94px;-webkit-text-stroke:0.4px #000;">999</div>
<div class="t" style="left:1789.00px;top:650.73px;font:bold 10.00px/10.00px 'Liberation Sans',sans-serif;color:#000;">12d</div>
<div class="t" style="left:1821.80px;top:672.26px;font:normal 18.20px/18.20px 'Liberation Mono',monospace;color:#000;transform:scale(1.0000,0.9350);transform-origin:0 13.94px;-webkit-text-stroke:0.4px #000;">G</div>
<div class="t" style="left:1856.40px;top:672.26px;font:normal 18.20px/18.20px 'Liberation Mono',monospace;color:#000;transform:scale(1.0000,0.9350);transform-origin:0 13.94px;-webkit-text-stroke:0.4px #000;">381</div>
<div class="t" style="left:1021.60px;top:709.93px;font:bold 10.00px/10.00px 'Liberation Sans',sans-serif;color:#000;">15</div>
<div class="t" style="left:1040.30px;top:709.93px;font:normal 10.00px/10.00px 'Liberation Sans',sans-serif;color:#000;">State</div>
<div class="t" style="left:1087.10px;top:709.93px;font:normal 10.00px/10.00px 'Liberation Sans',sans-serif;color:#000;">Employer's state ID number</div>
<div class="t" style="left:1294.70px;top:709.93px;font:normal 10.00px/10.00px 'Liberation Sans',sans-serif;color:#000;">16  State wages, tips, etc.</div>
<div class="t" style="left:1448.60px;top:709.93px;font:normal 10.00px/10.00px 'Liberation Sans',sans-serif;color:#000;">17  State income tax</div>
<div class="t" style="left:1597.60px;top:709.93px;font:normal 10.00px/10.00px 'Liberation Sans',sans-serif;color:#000;">18  Local wages, tips, etc.</div>
<div class="t" style="left:1760.30px;top:709.93px;font:normal 10.00px/10.00px 'Liberation Sans',sans-serif;color:#000;">19  Local income tax</div>
<div class="t" style="left:1909.20px;top:709.93px;font:normal 10.00px/10.00px 'Liberation Sans',sans-serif;color:#000;">20  Locality name</div>
<div class="t" style="left:1030.80px;top:727.53px;font:normal 16.80px/16.80px 'Liberation Mono',monospace;color:#000;transform:scale(1.0000,0.9400);transform-origin:0 12.87px;-webkit-text-stroke:0.25px #000;">DC</div>
<div class="t" style="left:1123.30px;top:726.46px;font:normal 18.20px/18.20px 'Liberation Mono',monospace;color:#000;transform:scale(1.0000,0.9350);transform-origin:0 13.94px;-webkit-text-stroke:0.4px #000;">786-41-049</div>
<div class="t" style="left:1293.10px;top:726.46px;font:normal 18.20px/18.20px 'Liberation Mono',monospace;color:#000;transform:scale(1.0000,0.9350);transform-origin:0 13.94px;-webkit-text-stroke:0.4px #000;">28287.19</div>
<div class="t" style="left:1446.60px;top:726.46px;font:normal 18.20px/18.20px 'Liberation Mono',monospace;color:#000;transform:scale(1.0000,0.9350);transform-origin:0 13.94px;-webkit-text-stroke:0.4px #000;">1608.75</div>
<div class="t" style="left:1596.40px;top:726.46px;font:normal 18.20px/18.20px 'Liberation Mono',monospace;color:#000;transform:scale(1.0000,0.9350);transform-origin:0 13.94px;-webkit-text-stroke:0.4px #000;">44590.58</div>
<div class="t" style="left:1759.90px;top:726.46px;font:normal 18.20px/18.20px 'Liberation Mono',monospace;color:#000;transform:scale(1.0000,0.9350);transform-origin:0 13.94px;-webkit-text-stroke:0.4px #000;">6842.08</div>
<div class="t" style="left:1908.90px;top:729.52px;font:normal 14.20px/14.20px 'Liberation Mono',monospace;color:#000;transform:scale(1.0000,0.9400);transform-origin:0 10.88px;-webkit-text-stroke:0.25px #000;">Rocha Wells</div>
<div class="t" style="left:1030.80px;top:764.53px;font:normal 16.80px/16.80px 'Liberation Mono',monospace;color:#000;transform:scale(1.0000,0.9400);transform-origin:0 12.87px;-webkit-text-stroke:0.25px #000;">CO</div>
<div class="t" style="left:1123.30px;top:763.46px;font:normal 18.20px/18.20px 'Liberation Mono',monospace;color:#000;transform:scale(1.0000,0.9350);transform-origin:0 13.94px;-webkit-text-stroke:0.4px #000;">239-95-269</div>
<div class="t" style="left:1293.10px;top:763.46px;font:normal 18.20px/18.20px 'Liberation Mono',monospace;color:#000;transform:scale(1.0000,0.9350);transform-origin:0 13.94px;-webkit-text-stroke:0.4px #000;">29750.61</div>
<div class="t" style="left:1446.60px;top:763.46px;font:normal 18.20px/18.20px 'Liberation Mono',monospace;color:#000;transform:scale(1.0000,0.9350);transform-origin:0 13.94px;-webkit-text-stroke:0.4px #000;">2279.5</div>
<div class="t" style="left:1596.40px;top:763.46px;font:normal 18.20px/18.20px 'Liberation Mono',monospace;color:#000;transform:scale(1.0000,0.9350);transform-origin:0 13.94px;-webkit-text-stroke:0.4px #000;">57464.5</div>
<div class="t" style="left:1759.90px;top:763.46px;font:normal 18.20px/18.20px 'Liberation Mono',monospace;color:#000;transform:scale(1.0000,0.9350);transform-origin:0 13.94px;-webkit-text-stroke:0.4px #000;">9061.93</div>
<div class="t" style="left:1908.90px;top:769.43px;font:normal 10.40px/10.40px 'Liberation Mono',monospace;color:#000;transform:scale(1.0000,0.9400);transform-origin:0 7.97px;-webkit-text-stroke:0.25px #000;">Rodriguez Trail</div>
<div class="t" style="left:1128.40px;top:787.41px;font:bold 18.30px/18.30px 'Liberation Sans',sans-serif;color:#000;">Wage and Tax</div>
<div class="t" style="left:1128.40px;top:810.41px;font:bold 18.30px/18.30px 'Liberation Sans',sans-serif;color:#000;">Statement</div>
<div class="t" style="left:1020.60px;top:817.77px;font:bold 10.90px/10.90px 'Liberation Sans',sans-serif;color:#000;">Form  W-2</div>
<div class="t" style="left:1020.60px;top:833.42px;font:bold 13.20px/13.20px 'Liberation Sans',sans-serif;color:#000;">Copy B--To Be Filed with Employee's FEDERAL Tax Return</div>
<div class="t" style="left:1020.60px;top:850.27px;font:normal 13.26px/13.26px 'Liberation Sans',sans-serif;color:#000;">This information is being furnished to the Internal Revenue Service.</div>
<svg style="left:1456.10px;top:792.00px;overflow:visible" width="20" height="31.5" viewBox="0 0 20 31.5"><path d="M1.90 1.90 H16.2 Q18.1 1.90 18.1 3.8 V13.9 Q18.1 15.8 16.2 15.8 H3.8 Q1.90 15.8 1.90 17.7 V20" fill="none" stroke="#000" stroke-width="3.80" stroke-linecap="round" stroke-linejoin="round"/><path d="M1.90 19 V29.6 H18.1" fill="none" stroke="#000" stroke-width="3.80" stroke-linecap="round" stroke-linejoin="miter"/></svg>
<svg style="left:1485.55px;top:792.00px;overflow:visible" width="20" height="31.5" viewBox="0 0 20 31.5"><path d="M4.5 1.90 H15.5 Q18.1 1.90 18.1 4.5 V27 Q18.1 29.6 15.5 29.6 H4.5 Q1.90 29.6 1.90 27 V4.5 Q1.90 1.90 4.5 1.90 Z" fill="none" stroke="#000" stroke-width="3.80" stroke-linecap="round" stroke-linejoin="round"/></svg>
<svg style="left:1515.00px;top:792.00px;overflow:visible" width="20" height="31.5" viewBox="0 0 20 31.5"><path d="M1.90 1.90 H10.1 V29.6" fill="none" stroke="#000" stroke-width="3.80" stroke-linecap="round" stroke-linejoin="miter"/><path d="M1.90 29.6 H18.1 V19" fill="none" stroke="#000" stroke-width="3.80" stroke-linecap="round" stroke-linejoin="round"/></svg>
<svg style="left:1544.45px;top:792.00px;overflow:visible" width="20" height="31.5" viewBox="0 0 20 31.5"><path d="M4.5 1.90 H15.5 Q18.1 1.90 18.1 4.5 V27 Q18.1 29.6 15.5 29.6 H4.5 Q1.90 29.6 1.90 27 V4.5 Q1.90 1.90 4.5 1.90 Z" fill="none" stroke="#000" stroke-width="3.80" stroke-linecap="round" stroke-linejoin="round"/></svg>
<div class="t" style="left:1712.29px;top:793.25px;font:normal 12.10px/12.10px 'Liberation Sans',sans-serif;color:#000;">Department of the Treasury--Internal Revenue Service</div>
<div class="r" style="left:1019.20px;top:902.05px;width:986.80px;height:2.70px;background:repeating-linear-gradient(to right, #7a7a7a 0, #7a7a7a 9.10px, transparent 9.10px, transparent 11.90px)"></div>
<div class="t" style="left:1399.90px;top:903.23px;font:normal 10.95px/10.95px 'Liberation Sans',sans-serif;color:#000;">Cut here.  Keep lower portion for your records.</div>
<div class="r" style="left:1016.85px;top:940.25px;width:990.30px;height:1.30px;background:#000"></div>
<div class="r" style="left:1016.85px;top:940.90px;width:1.30px;height:493.45px;background:#000"></div>
<div class="r" style="left:2005.85px;top:940.90px;width:1.30px;height:493.45px;background:#000"></div>
<div class="r" style="left:1186.65px;top:940.90px;width:1.30px;height:37.00px;background:#000"></div>
<div class="r" style="left:1493.95px;top:940.90px;width:1.30px;height:37.00px;background:#000"></div>
<div class="r" style="left:1017.50px;top:977.25px;width:989.00px;height:1.30px;background:#000"></div>
<div class="r" style="left:1017.50px;top:1015.55px;width:528.10px;height:1.30px;background:#000"></div>
<div class="r" style="left:1017.50px;top:1129.25px;width:528.10px;height:1.30px;background:#000"></div>
<div class="r" style="left:1017.50px;top:1167.75px;width:528.10px;height:1.30px;background:#000"></div>
<div class="r" style="left:1017.50px;top:1358.05px;width:989.00px;height:1.30px;background:#000"></div>
<div class="r" style="left:1544.95px;top:977.90px;width:1.30px;height:380.80px;background:#000"></div>
<div class="r" style="left:1778.05px;top:977.90px;width:1.30px;height:380.80px;background:#000"></div>
<div class="r" style="left:1545.60px;top:1014.95px;width:460.90px;height:1.30px;background:#000"></div>
<div class="r" style="left:1545.60px;top:1054.25px;width:460.90px;height:1.30px;background:#000"></div>
<div class="r" style="left:1545.60px;top:1091.95px;width:460.90px;height:1.30px;background:#000"></div>
<div class="r" style="left:1545.60px;top:1129.75px;width:460.90px;height:1.30px;background:#000"></div>
<div class="r" style="left:1545.60px;top:1167.35px;width:460.90px;height:1.30px;background:#000"></div>
<div class="r" style="left:1545.60px;top:1211.25px;width:460.90px;height:1.30px;background:#000"></div>
<div class="r" style="left:1545.60px;top:1254.75px;width:460.90px;height:1.30px;background:#000"></div>
<div class="r" style="left:1778.70px;top:1298.55px;width:227.80px;height:1.30px;background:#000"></div>
<div class="r" style="left:1778.70px;top:1342.45px;width:227.80px;height:1.30px;background:#000"></div>
<div class="r" style="left:1852.45px;top:1180.90px;width:1.30px;height:31.00px;background:#000"></div>
<div class="r" style="left:1852.45px;top:1224.20px;width:1.30px;height:31.20px;background:#000"></div>
<div class="r" style="left:1852.45px;top:1268.50px;width:1.30px;height:30.70px;background:#000"></div>
<div class="r" style="left:1852.45px;top:1312.80px;width:1.30px;height:30.30px;background:#000"></div>
<div class="r" style="left:1017.50px;top:1395.80px;width:989.00px;height:1.00px;background:repeating-linear-gradient(to right, #000 0, #000 3.20px, transparent 3.20px, transparent 5.00px)"></div>
<div class="r" style="left:1016.85px;top:1433.05px;width:48.05px;height:1.30px;background:#000"></div>
<div class="r" style="left:1064.90px;top:1433.20px;width:224.60px;height:1.00px;background:repeating-linear-gradient(to right, #000 0, #000 3.20px, transparent 3.20px, transparent 5.00px)"></div>
<div class="r" style="left:1289.50px;top:1433.05px;width:717.65px;height:1.30px;background:#000"></div>
<div class="r" style="left:1064.25px;top:1358.70px;width:1.30px;height:75.00px;background:#000"></div>
<div class="r" style="left:1288.85px;top:1358.70px;width:1.30px;height:75.00px;background:#000"></div>
<div class="r" style="left:1442.75px;top:1358.70px;width:1.30px;height:75.00px;background:#000"></div>
<div class="r" style="left:1591.55px;top:1358.70px;width:1.30px;height:75.00px;background:#000"></div>
<div class="r" style="left:1755.05px;top:1358.70px;width:1.30px;height:75.00px;background:#000"></div>
<div class="r" style="left:1903.65px;top:1358.70px;width:1.30px;height:75.00px;background:#000"></div>
<div class="t" style="left:1061.09px;top:940.68px;font:bold 16.20px/16.20px 'Liberation Sans',sans-serif;color:#000;">REISSUED</div>
<div class="t" style="left:1053.31px;top:961.23px;font:bold 16.50px/16.50px 'Liberation Sans',sans-serif;color:#000;">STATEMENT</div>
<div class="t" style="left:1190.20px;top:942.63px;font:bold 10.00px/10.00px 'Liberation Sans',sans-serif;color:#000;">a</div>
<div class="t" style="left:1203.70px;top:942.63px;font:bold 10.00px/10.00px 'Liberation Sans',sans-serif;color:#000;">Employee's social security number</div>
<div class="r" style="left:1265.20px;top:956.90px;width:123.70px;height:17.40px;border:3.8px solid #3b6fdc;border-radius:8px;box-sizing:border-box;background:rgba(59,111,220,0.16)"></div>
<div class="t" style="left:1269.10px;top:957.56px;font:normal 18.20px/18.20px 'Liberation Mono',monospace;color:#000;transform:scale(1.0000,0.9350);transform-origin:0 13.94px;-webkit-text-stroke:0.4px #000;">077-49-4905</div>
<div class="t" style="left:1511.10px;top:960.83px;font:normal 10.00px/10.00px 'Liberation Sans',sans-serif;color:#000;">OMB No. 1545-0008</div>
<div class="t" style="left:1618.00px;top:942.03px;font:normal 10.00px/10.00px 'Liberation Sans',sans-serif;color:#000;transform:scale(1.0017,1.0000);transform-origin:0 8.47px;">This information is being furnished to the Internal Revenue Service.  If you are required</div>
<div class="t" style="left:1618.00px;top:954.33px;font:normal 10.00px/10.00px 'Liberation Sans',sans-serif;color:#000;">to file a tax return, a negligence penalty or other sanction may be imposed on you if</div>
<div class="t" style="left:1618.00px;top:966.23px;font:normal 10.00px/10.00px 'Liberation Sans',sans-serif;color:#000;">this income is taxable and you fail to report it.</div>
<div class="t" style="left:1026.90px;top:979.93px;font:bold 10.00px/10.00px 'Liberation Sans',sans-serif;color:#000;">b</div>
<div class="t" style="left:1040.40px;top:979.93px;font:normal 10.00px/10.00px 'Liberation Sans',sans-serif;color:#000;">Employer identification number</div>
<div class="r" style="left:1065.50px;top:994.60px;width:112.30px;height:17.80px;border:3.8px solid #3b6fdc;border-radius:8px;box-sizing:border-box;background:rgba(59,111,220,0.16)"></div>
<div class="t" style="left:1068.70px;top:995.36px;font:normal 18.20px/18.20px 'Liberation Mono',monospace;color:#000;transform:scale(1.0000,0.9350);transform-origin:0 13.94px;-webkit-text-stroke:0.4px #000;">37-2766773</div>
<div class="t" style="left:1026.90px;top:1018.13px;font:bold 10.00px/10.00px 'Liberation Sans',sans-serif;color:#000;">c</div>
<div class="t" style="left:1040.40px;top:1018.13px;font:normal 10.00px/10.00px 'Liberation Sans',sans-serif;color:#000;">Employer's name, address, and ZIP code</div>
<div class="r" style="left:1064.50px;top:1034.40px;width:220.50px;height:18.20px;border:3.8px solid #3b6fdc;border-radius:8px;box-sizing:border-box;background:rgba(59,111,220,0.16)"></div>
<div class="t" style="left:1068.10px;top:1035.06px;font:normal 18.20px/18.20px 'Liberation Mono',monospace;color:#000;transform:scale(1.0000,0.9350);transform-origin:0 13.94px;-webkit-text-stroke:0.4px #000;">Richardson-Brown PLC</div>
<div class="r" style="left:1064.50px;top:1059.90px;width:320.80px;height:47.30px;border:3.8px solid #3b6fdc;border-radius:8px;box-sizing:border-box;background:rgba(59,111,220,0.16)"></div>
<div class="t" style="left:1068.10px;top:1060.46px;font:normal 18.20px/18.20px 'Liberation Mono',monospace;color:#000;transform:scale(1.0000,0.9350);transform-origin:0 13.94px;-webkit-text-stroke:0.4px #000;">2936 Howard Radial</div>
<div class="t" style="left:1068.10px;top:1085.66px;font:normal 18.20px/18.20px 'Liberation Mono',monospace;color:#000;transform:scale(1.0000,0.9350);transform-origin:0 13.94px;-webkit-text-stroke:0.4px #000;">West Raymond  NV   44735-6958</div>
<div class="t" style="left:1026.50px;top:1132.13px;font:bold 10.00px/10.00px 'Liberation Sans',sans-serif;color:#000;">d</div>
<div class="t" style="left:1039.90px;top:1132.13px;font:normal 10.00px/10.00px 'Liberation Sans',sans-serif;color:#000;">Control number</div>
<div class="r" style="left:1065.60px;top:1147.40px;width:77.70px;height:17.70px;border:3.8px solid #3b6fdc;border-radius:8px;box-sizing:border-box;background:rgba(59,111,220,0.16)"></div>
<div class="t" style="left:1068.70px;top:1147.36px;font:normal 18.20px/18.20px 'Liberation Mono',monospace;color:#000;transform:scale(1.0000,0.9350);transform-origin:0 13.94px;-webkit-text-stroke:0.4px #000;">4741345</div>
<div class="t" style="left:1026.50px;top:1169.93px;font:bold 10.00px/10.00px 'Liberation Sans',sans-serif;color:#000;">e</div>
<div class="t" style="left:1039.90px;top:1169.93px;font:normal 10.00px/10.00px 'Liberation Sans',sans-serif;color:#000;">Employee's first name and initial</div>
<div class="t" style="left:1240.40px;top:1169.93px;font:normal 10.00px/10.00px 'Liberation Sans',sans-serif;color:#000;">Last name</div>
<div class="t" style="left:1068.00px;top:1202.77px;font:normal 20.40px/20.40px 'Liberation Mono',monospace;color:#000;transform:scale(1.0000,0.9300);transform-origin:0 15.63px;-webkit-text-stroke:0.6px #000;">April   Hensley</div>
<div class="t" style="left:1068.00px;top:1232.97px;font:normal 20.40px/20.40px 'Liberation Mono',monospace;color:#000;transform:scale(1.0000,0.9300);transform-origin:0 15.63px;-webkit-text-stroke:0.6px #000;">31403 David Circles Suite 863</div>
<div class="t" style="left:1068.00px;top:1260.27px;font:normal 20.40px/20.40px 'Liberation Mono',monospace;color:#000;transform:scale(1.0000,0.9300);transform-origin:0 15.63px;-webkit-text-stroke:0.6px #000;">West Erinfort  WY    45881-3334</div>
<div class="t" style="left:1026.50px;top:1347.03px;font:bold 10.00px/10.00px 'Liberation Sans',sans-serif;color:#000;">f</div>
<div class="t" style="left:1039.90px;top:1347.03px;font:normal 10.00px/10.00px 'Liberation Sans',sans-serif;color:#000;">Employee's address and ZIP code</div>
<div class="t" style="left:1561.52px;top:980.83px;font:bold 10.00px/10.00px 'Liberation Sans',sans-serif;color:#000;">1</div>
<div class="t" style="left:1585.80px;top:980.83px;font:normal 10.00px/10.00px 'Liberation Sans',sans-serif;color:#000;">Wages, tips, other compensation</div>
<div class="t" style="left:1793.72px;top:980.83px;font:bold 10.00px/10.00px 'Liberation Sans',sans-serif;color:#000;">2</div>
<div class="t" style="left:1818.60px;top:980.83px;font:normal 10.00px/10.00px 'Liberation Sans',sans-serif;color:#000;">Federal income tax withheld</div>
<div class="t" style="left:1561.52px;top:1019.23px;font:bold 10.00px/10.00px 'Liberation Sans',sans-serif;color:#000;">3</div>
<div class="t" style="left:1585.80px;top:1019.23px;font:normal 10.00px/10.00px 'Liberation Sans',sans-serif;color:#000;">Social security wages</div>
<div class="t" style="left:1793.72px;top:1019.23px;font:bold 10.00px/10.00px 'Liberation Sans',sans-serif;color:#000;">4</div>
<div class="t" style="left:1818.60px;top:1019.23px;font:normal 10.00px/10.00px 'Liberation Sans',sans-serif;color:#000;">Social security tax withheld</div>
<div class="t" style="left:1561.52px;top:1056.43px;font:bold 10.00px/10.00px 'Liberation Sans',sans-serif;color:#000;">5</div>
<div class="t" style="left:1585.80px;top:1056.43px;font:normal 10.00px/10.00px 'Liberation Sans',sans-serif;color:#000;">Medicare wages and tips</div>
<div class="t" style="left:1793.72px;top:1056.43px;font:bold 10.00px/10.00px 'Liberation Sans',sans-serif;color:#000;">6</div>
<div class="t" style="left:1818.60px;top:1056.43px;font:normal 10.00px/10.00px 'Liberation Sans',sans-serif;color:#000;">Medicare tax withheld</div>
<div class="t" style="left:1561.52px;top:1094.13px;font:bold 10.00px/10.00px 'Liberation Sans',sans-serif;color:#000;">7</div>
<div class="t" style="left:1585.80px;top:1094.13px;font:normal 10.00px/10.00px 'Liberation Sans',sans-serif;color:#000;">Social security tips</div>
<div class="t" style="left:1793.72px;top:1094.13px;font:bold 10.00px/10.00px 'Liberation Sans',sans-serif;color:#000;">8</div>
<div class="t" style="left:1818.60px;top:1094.13px;font:normal 10.00px/10.00px 'Liberation Sans',sans-serif;color:#000;">Allocated tips</div>
<div class="t" style="left:1561.52px;top:1132.53px;font:bold 10.00px/10.00px 'Liberation Sans',sans-serif;color:#000;">9</div>
<div class="t" style="left:1585.80px;top:1132.53px;font:normal 10.00px/10.00px 'Liberation Sans',sans-serif;color:#000;">Advance EIC payment</div>
<div class="t" style="left:1790.94px;top:1132.53px;font:bold 10.00px/10.00px 'Liberation Sans',sans-serif;color:#000;">10</div>
<div class="t" style="left:1818.60px;top:1132.53px;font:normal 10.00px/10.00px 'Liberation Sans',sans-serif;color:#000;">Dependent care benefits</div>
<div class="t" style="left:1596.40px;top:1072.16px;font:normal 18.20px/18.20px 'Liberation Mono',monospace;color:#000;transform:scale(1.0000,0.9350);transform-origin:0 13.94px;-webkit-text-stroke:0.4px #000;">50518.06</div>
<div class="t" style="left:1856.20px;top:1072.16px;font:normal 18.20px/18.20px 'Liberation Mono',monospace;color:#000;transform:scale(1.0000,0.9350);transform-origin:0 13.94px;-webkit-text-stroke:0.4px #000;">1465.02</div>
<div class="t" style="left:1596.40px;top:1110.36px;font:normal 18.20px/18.20px 'Liberation Mono',monospace;color:#000;transform:scale(1.0000,0.9350);transform-origin:0 13.94px;-webkit-text-stroke:0.4px #000;">67588.01</div>
<div class="t" style="left:1856.20px;top:1110.36px;font:normal 18.20px/18.20px 'Liberation Mono',monospace;color:#000;transform:scale(1.0000,0.9350);transform-origin:0 13.94px;-webkit-text-stroke:0.4px #000;">50518.06</div>
<div class="t" style="left:1856.20px;top:1146.86px;font:normal 18.20px/18.20px 'Liberation Mono',monospace;color:#000;transform:scale(1.0000,0.9350);transform-origin:0 13.94px;-webkit-text-stroke:0.4px #000;">238</div>
<div class="r" style="left:1594.30px;top:994.10px;width:89.50px;height:18.00px;border:3.8px solid #3b6fdc;border-radius:8px;box-sizing:border-box;background:rgba(59,111,220,0.16)"></div>
<div class="r" style="left:1802.80px;top:994.10px;width:90.00px;height:18.00px;border:3.8px solid #3b6fdc;border-radius:8px;box-sizing:border-box;background:rgba(59,111,220,0.16)"></div>
<div class="r" style="left:1594.00px;top:1034.50px;width:89.10px;height:18.30px;border:3.8px solid #3b6fdc;border-radius:8px;box-sizing:border-box;background:rgba(59,111,220,0.16)"></div>
<div class="r" style="left:1802.80px;top:1034.50px;width:79.00px;height:18.30px;border:3.8px solid #3b6fdc;border-radius:8px;box-sizing:border-box;background:rgba(59,111,220,0.16)"></div>
<div class="t" style="left:1596.40px;top:995.46px;font:normal 18.20px/18.20px 'Liberation Mono',monospace;color:#000;transform:scale(1.0000,0.9350);transform-origin:0 13.94px;-webkit-text-stroke:0.4px #000;">55151.93</div>
<div class="t" style="left:1805.60px;top:995.46px;font:normal 18.20px/18.20px 'Liberation Mono',monospace;color:#000;transform:scale(1.0000,0.9350);transform-origin:0 13.94px;-webkit-text-stroke:0.4px #000;">16606.17</div>
<div class="t" style="left:1596.40px;top:1035.16px;font:normal 18.20px/18.20px 'Liberation Mono',monospace;color:#000;transform:scale(1.0000,0.9350);transform-origin:0 13.94px;-webkit-text-stroke:0.4px #000;">67588.01</div>
<div class="t" style="left:1805.60px;top:1035.16px;font:normal 18.20px/18.20px 'Liberation Mono',monospace;color:#000;transform:scale(1.0000,0.9350);transform-origin:0 13.94px;-webkit-text-stroke:0.4px #000;">5170.48</div>
<div class="t" style="left:1555.60px;top:1169.73px;font:bold 10.00px/10.00px 'Liberation Sans',sans-serif;color:#000;">11</div>
<div class="t" style="left:1585.40px;top:1169.73px;font:normal 10.00px/10.00px 'Liberation Sans',sans-serif;color:#000;">Nonqualified plans</div>
<div class="t" style="left:1789.00px;top:1169.73px;font:bold 10.00px/10.00px 'Liberation Sans',sans-serif;color:#000;">12a</div>
<div class="t" style="left:1819.60px;top:1169.73px;font:bold 10.00px/10.00px 'Liberation Sans',sans-serif;color:#000;">See instructions for box 12</div>
<div class="t" style="left:1595.80px;top:1191.86px;font:normal 18.20px/18.20px 'Liberation Mono',monospace;color:#000;transform:scale(1.0000,0.9350);transform-origin:0 13.94px;-webkit-text-stroke:0.4px #000;">210</div>
<div class="t" style="left:1821.80px;top:1191.86px;font:normal 18.20px/18.20px 'Liberation Mono',monospace;color:#000;transform:scale(1.0000,0.9350);transform-origin:0 13.94px;-webkit-text-stroke:0.4px #000;">G</div>
<div class="t" style="left:1856.40px;top:1191.86px;font:normal 18.20px/18.20px 'Liberation Mono',monospace;color:#000;transform:scale(1.0000,0.9350);transform-origin:0 13.94px;-webkit-text-stroke:0.4px #000;">8500</div>
<div class="t" style="left:1555.60px;top:1213.53px;font:bold 10.00px/10.00px 'Liberation Sans',sans-serif;color:#000;">13</div>
<div class="t" style="left:1570.90px;top:1214.37px;font:normal 8.30px/8.30px 'Liberation Sans',sans-serif;color:#000;">Statutory</div>
<div class="t" style="left:1570.90px;top:1224.27px;font:normal 8.30px/8.30px 'Liberation Sans',sans-serif;color:#000;">employee</div>
<div class="t" style="left:1640.50px;top:1214.37px;font:normal 8.30px/8.30px 'Liberation Sans',sans-serif;color:#000;">Retirement</div>
<div class="t" style="left:1640.50px;top:1224.27px;font:normal 8.30px/8.30px 'Liberation Sans',sans-serif;color:#000;">plan</div>
<div class="t" style="left:1710.80px;top:1214.37px;font:normal 8.30px/8.30px 'Liberation Sans',sans-serif;color:#000;">Third-party</div>
<div class="t" style="left:1710.80px;top:1224.27px;font:normal 8.30px/8.30px 'Liberation Sans',sans-serif;color:#000;">sick pay</div>
<div class="r" style="left:1568.80px;top:1232.80px;width:23.50px;height:22.10px;border:1.3px solid #000;box-sizing:border-box;background:#fff"></div>
<div class="r" style="left:1638.60px;top:1232.80px;width:23.80px;height:22.10px;border:1.3px solid #000;box-sizing:border-box;background:#fff"></div>
<div class="r" style="left:1708.60px;top:1232.80px;width:23.80px;height:22.10px;border:1.3px solid #000;box-sizing:border-box;background:#fff"></div>
<div class="t" style="left:1646.30px;top:1237.68px;font:bold 14.00px/14.00px 'Liberation Mono',monospace;color:#000;-webkit-text-stroke:0.3px #000;">X</div>
<div class="t" style="left:1716.30px;top:1237.68px;font:bold 14.00px/14.00px 'Liberation Mono',monospace;color:#000;-webkit-text-stroke:0.3px #000;">X</div>
<div class="t" style="left:1789.00px;top:1213.53px;font:bold 10.00px/10.00px 'Liberation Sans',sans-serif;color:#000;">12b</div>
<div class="t" style="left:1856.40px;top:1234.06px;font:normal 18.20px/18.20px 'Liberation Mono',monospace;color:#000;transform:scale(1.0000,0.9350);transform-origin:0 13.94px;-webkit-text-stroke:0.4px #000;">489</div>
<div class="t" style="left:1555.60px;top:1257.93px;font:bold 10.00px/10.00px 'Liberation Sans',sans-serif;color:#000;">14</div>
<div class="t" style="left:1585.40px;top:1257.93px;font:normal 10.00px/10.00px 'Liberation Sans',sans-serif;color:#000;">Other (see enclosed Notice to Employee)</div>
<div class="t" style="left:1789.00px;top:1257.93px;font:bold 10.00px/10.00px 'Liberation Sans',sans-serif;color:#000;">12c</div>
<div class="t" style="left:1821.80px;top:1279.46px;font:normal 18.20px/18.20px 'Liberation Mono',monospace;color:#000;transform:scale(1.0000,0.9350);transform-origin:0 13.94px;-webkit-text-stroke:0.4px #000;">D</div>
<div class="t" style="left:1856.40px;top:1279.46px;font:normal 18.20px/18.20px 'Liberation Mono',monospace;color:#000;transform:scale(1.0000,0.9350);transform-origin:0 13.94px;-webkit-text-stroke:0.4px #000;">999</div>
<div class="t" style="left:1789.00px;top:1301.13px;font:bold 10.00px/10.00px 'Liberation Sans',sans-serif;color:#000;">12d</div>
<div class="t" style="left:1821.80px;top:1322.66px;font:normal 18.20px/18.20px 'Liberation Mono',monospace;color:#000;transform:scale(1.0000,0.9350);transform-origin:0 13.94px;-webkit-text-stroke:0.4px #000;">G</div>
<div class="t" style="left:1856.40px;top:1322.66px;font:normal 18.20px/18.20px 'Liberation Mono',monospace;color:#000;transform:scale(1.0000,0.9350);transform-origin:0 13.94px;-webkit-text-stroke:0.4px #000;">381</div>
<div class="t" style="left:1021.60px;top:1360.33px;font:bold 10.00px/10.00px 'Liberation Sans',sans-serif;color:#000;">15</div>
<div class="t" style="left:1040.30px;top:1360.33px;font:normal 10.00px/10.00px 'Liberation Sans',sans-serif;color:#000;">State</div>
<div class="t" style="left:1087.10px;top:1360.33px;font:normal 10.00px/10.00px 'Liberation Sans',sans-serif;color:#000;">Employer's state ID number</div>
<div class="t" style="left:1294.70px;top:1360.33px;font:normal 10.00px/10.00px 'Liberation Sans',sans-serif;color:#000;">16  State wages, tips, etc.</div>
<div class="t" style="left:1448.60px;top:1360.33px;font:normal 10.00px/10.00px 'Liberation Sans',sans-serif;color:#000;">17  State income tax</div>
<div class="t" style="left:1597.60px;top:1360.33px;font:normal 10.00px/10.00px 'Liberation Sans',sans-serif;color:#000;">18  Local wages, tips, etc.</div>
<div class="t" style="left:1760.30px;top:1360.33px;font:normal 10.00px/10.00px 'Liberation Sans',sans-serif;color:#000;">19  Local income tax</div>
<div class="t" style="left:1909.20px;top:1360.33px;font:normal 10.00px/10.00px 'Liberation Sans',sans-serif;color:#000;">20  Locality name</div>
<div class="t" style="left:1030.80px;top:1377.93px;font:normal 16.80px/16.80px 'Liberation Mono',monospace;color:#000;transform:scale(1.0000,0.9400);transform-origin:0 12.87px;-webkit-text-stroke:0.25px #000;">DC</div>
<div class="t" style="left:1123.30px;top:1376.86px;font:normal 18.20px/18.20px 'Liberation Mono',monospace;color:#000;transform:scale(1.0000,0.9350);transform-origin:0 13.94px;-webkit-text-stroke:0.4px #000;">786-41-049</div>
<div class="t" style="left:1293.10px;top:1376.86px;font:normal 18.20px/18.20px 'Liberation Mono',monospace;color:#000;transform:scale(1.0000,0.9350);transform-origin:0 13.94px;-webkit-text-stroke:0.4px #000;">28287.19</div>
<div class="t" style="left:1446.60px;top:1376.86px;font:normal 18.20px/18.20px 'Liberation Mono',monospace;color:#000;transform:scale(1.0000,0.9350);transform-origin:0 13.94px;-webkit-text-stroke:0.4px #000;">1608.75</div>
<div class="t" style="left:1596.40px;top:1376.86px;font:normal 18.20px/18.20px 'Liberation Mono',monospace;color:#000;transform:scale(1.0000,0.9350);transform-origin:0 13.94px;-webkit-text-stroke:0.4px #000;">44590.58</div>
<div class="t" style="left:1759.90px;top:1376.86px;font:normal 18.20px/18.20px 'Liberation Mono',monospace;color:#000;transform:scale(1.0000,0.9350);transform-origin:0 13.94px;-webkit-text-stroke:0.4px #000;">6842.08</div>
<div class="t" style="left:1908.90px;top:1379.92px;font:normal 14.20px/14.20px 'Liberation Mono',monospace;color:#000;transform:scale(1.0000,0.9400);transform-origin:0 10.88px;-webkit-text-stroke:0.25px #000;">Rocha Wells</div>
<div class="t" style="left:1030.80px;top:1414.93px;font:normal 16.80px/16.80px 'Liberation Mono',monospace;color:#000;transform:scale(1.0000,0.9400);transform-origin:0 12.87px;-webkit-text-stroke:0.25px #000;">CO</div>
<div class="t" style="left:1123.30px;top:1413.86px;font:normal 18.20px/18.20px 'Liberation Mono',monospace;color:#000;transform:scale(1.0000,0.9350);transform-origin:0 13.94px;-webkit-text-stroke:0.4px #000;">239-95-269</div>
<div class="t" style="left:1293.10px;top:1413.86px;font:normal 18.20px/18.20px 'Liberation Mono',monospace;color:#000;transform:scale(1.0000,0.9350);transform-origin:0 13.94px;-webkit-text-stroke:0.4px #000;">29750.61</div>
<div class="t" style="left:1446.60px;top:1413.86px;font:normal 18.20px/18.20px 'Liberation Mono',monospace;color:#000;transform:scale(1.0000,0.9350);transform-origin:0 13.94px;-webkit-text-stroke:0.4px #000;">2279.5</div>
<div class="t" style="left:1596.40px;top:1413.86px;font:normal 18.20px/18.20px 'Liberation Mono',monospace;color:#000;transform:scale(1.0000,0.9350);transform-origin:0 13.94px;-webkit-text-stroke:0.4px #000;">57464.5</div>
<div class="t" style="left:1759.90px;top:1413.86px;font:normal 18.20px/18.20px 'Liberation Mono',monospace;color:#000;transform:scale(1.0000,0.9350);transform-origin:0 13.94px;-webkit-text-stroke:0.4px #000;">9061.93</div>
<div class="t" style="left:1908.90px;top:1419.83px;font:normal 10.40px/10.40px 'Liberation Mono',monospace;color:#000;transform:scale(1.0000,0.9400);transform-origin:0 7.97px;-webkit-text-stroke:0.25px #000;">Rodriguez Trail</div>
<div class="t" style="left:1128.40px;top:1437.41px;font:bold 18.30px/18.30px 'Liberation Sans',sans-serif;color:#000;">Wage and Tax</div>
<div class="t" style="left:1128.40px;top:1460.11px;font:bold 18.30px/18.30px 'Liberation Sans',sans-serif;color:#000;">Statement</div>
<div class="t" style="left:1020.30px;top:1466.37px;font:bold 10.90px/10.90px 'Liberation Sans',sans-serif;color:#000;">Form  W-2</div>
<div class="t" style="left:1020.30px;top:1481.07px;font:bold 13.15px/13.15px 'Liberation Sans',sans-serif;color:#000;">Copy C For EMPLOYEE'S RECORDS.</div>
<div class="t" style="left:1020.30px;top:1496.62px;font:bold 13.20px/13.20px 'Liberation Sans',sans-serif;color:#000;">(See enclosed Notice to Employee.)</div>
<svg style="left:1455.60px;top:1441.00px;overflow:visible" width="20" height="31.5" viewBox="0 0 20 31.5"><path d="M1.90 1.90 H16.2 Q18.1 1.90 18.1 3.8 V13.9 Q18.1 15.8 16.2 15.8 H3.8 Q1.90 15.8 1.90 17.7 V20" fill="none" stroke="#000" stroke-width="3.80" stroke-linecap="round" stroke-linejoin="round"/><path d="M1.90 19 V29.6 H18.1" fill="none" stroke="#000" stroke-width="3.80" stroke-linecap="round" stroke-linejoin="miter"/></svg>
<svg style="left:1485.05px;top:1441.00px;overflow:visible" width="20" height="31.5" viewBox="0 0 20 31.5"><path d="M4.5 1.90 H15.5 Q18.1 1.90 18.1 4.5 V27 Q18.1 29.6 15.5 29.6 H4.5 Q1.90 29.6 1.90 27 V4.5 Q1.90 1.90 4.5 1.90 Z" fill="none" stroke="#000" stroke-width="3.80" stroke-linecap="round" stroke-linejoin="round"/></svg>
<svg style="left:1514.50px;top:1441.00px;overflow:visible" width="20" height="31.5" viewBox="0 0 20 31.5"><path d="M1.90 1.90 H10.1 V29.6" fill="none" stroke="#000" stroke-width="3.80" stroke-linecap="round" stroke-linejoin="miter"/><path d="M1.90 29.6 H18.1 V19" fill="none" stroke="#000" stroke-width="3.80" stroke-linecap="round" stroke-linejoin="round"/></svg>
<svg style="left:1543.95px;top:1441.00px;overflow:visible" width="20" height="31.5" viewBox="0 0 20 31.5"><path d="M4.5 1.90 H15.5 Q18.1 1.90 18.1 4.5 V27 Q18.1 29.6 15.5 29.6 H4.5 Q1.90 29.6 1.90 27 V4.5 Q1.90 1.90 4.5 1.90 Z" fill="none" stroke="#000" stroke-width="3.80" stroke-linecap="round" stroke-linejoin="round"/></svg>
<div class="t" style="left:1712.59px;top:1441.55px;font:normal 12.10px/12.10px 'Liberation Sans',sans-serif;color:#000;">Department of the Treasury--Internal Revenue Service</div>
<div class="t" style="left:1757.70px;top:1461.90px;font:bold 12.05px/12.05px 'Liberation Sans',sans-serif;color:#000;">Safe, accurate,</div>
<div class="t" style="left:1757.70px;top:1477.70px;font:bold 12.05px/12.05px 'Liberation Sans',sans-serif;color:#000;">FAST!  Use</div>
<svg style="left:1855.60px;top:1464.90px" width="107.40" height="24.80" viewBox="0 0 110 26" preserveAspectRatio="none"><ellipse cx="55" cy="13" rx="55" ry="13" fill="#1a1a1a"/><g fill="#fff" stroke="#fff" font-family="Liberation Sans" font-weight="bold" font-style="italic"><text x="3.8" y="13.6" font-size="9.6" textLength="16" lengthAdjust="spacingAndGlyphs" stroke-width="0.6">IRS</text><text x="16.8" y="21.3" font-size="28" textLength="18" lengthAdjust="spacingAndGlyphs" stroke-width="0.9">e</text><path d="M36 15.6 L47.6 10.8 L46 14.2 L57.6 9.2 L45 15.8 L46.6 12.6 Z" stroke-width="1.5" stroke-linejoin="round"/><text x="57" y="20.6" font-size="20.5" textLength="38.5" lengthAdjust="spacingAndGlyphs" stroke-width="1.0">file</text></g></svg>
</body></html>
